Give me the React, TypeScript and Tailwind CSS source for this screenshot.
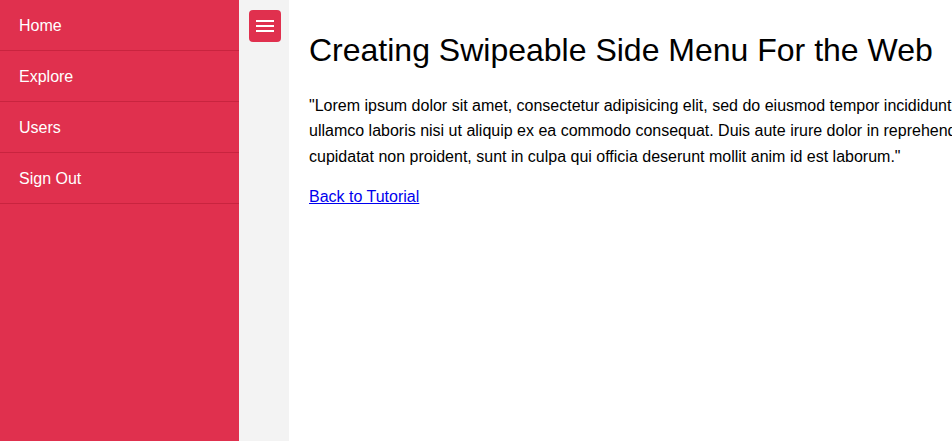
import { type ReactNode } from 'react';

const MENU = ['Home', 'Explore', 'Users', 'Sign Out'];

function MenuItem({ children }: { children: ReactNode }) {
  return (
    <a
      href="#"
      className="block h-[51px] border-b border-[#c8243f] pl-[19px] pt-[17px] text-[16px] leading-[1.15] text-white"
    >
      {children}
    </a>
  );
}

export default function App() {
  return (
    <div className="flex h-[441px] w-full overflow-hidden bg-white font-['Liberation_Sans',Arial,sans-serif]">
      <nav className="flex w-[239px] shrink-0 flex-col bg-[#e0304e]">
        {MENU.map((label) => (
          <MenuItem key={label}>{label}</MenuItem>
        ))}
      </nav>

      <div className="w-[50px] shrink-0 bg-[#f3f3f3] pl-[10px] pt-[10px]">
        <button
          type="button"
          aria-label="Toggle menu"
          className="flex h-[32px] w-[32px] flex-col items-center justify-center gap-[3px] rounded-[4px] bg-[#e0304e]"
        >
          <span className="block h-[2px] w-[18px] bg-white" />
          <span className="block h-[2px] w-[18px] bg-white" />
          <span className="block h-[2px] w-[18px] bg-white" />
        </button>
      </div>

      <main className="min-w-0 flex-1 overflow-hidden pl-[20px] pt-[32px] text-black">
        <h1 className="whitespace-nowrap text-[32px] leading-[1.15]">
          Creating Swipeable Side Menu For the Web
        </h1>
        <p className="mt-[24px] whitespace-nowrap text-[16px] leading-[1.6]">
          "Lorem ipsum dolor sit amet, consectetur adipisicing elit, sed do eiusmod tempor incididunt ut
          labore et dolore magna aliqua. Ut enim ad minim veniam, quis nostrud exercitation
          <br />
          ullamco laboris nisi ut aliquip ex ea commodo consequat. Duis aute irure dolor in reprehenderit in
          voluptate velit esse cillum dolore eu fugiat nulla pariatur. Excepteur sint occaecat
          <br />
          cupidatat non proident, sunt in culpa qui officia deserunt mollit anim id est laborum."
        </p>
        <p className="mt-[14px] text-[16px] leading-[1.6]">
          <a href="#" className="text-[#0000ee] underline">
            Back to Tutorial
          </a>
        </p>
      </main>
    </div>
  );
}
